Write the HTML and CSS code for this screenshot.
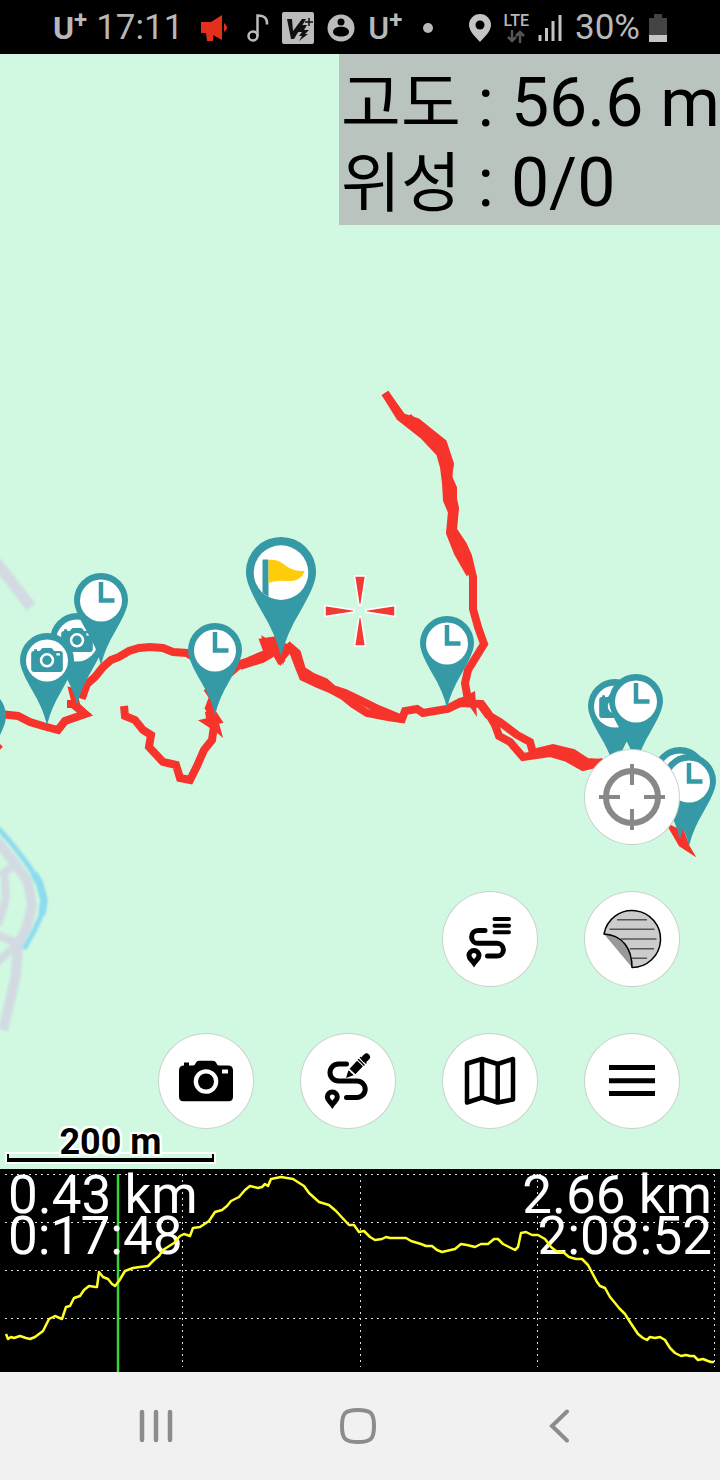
FILE: index.html
```html
<!DOCTYPE html>
<html lang="ko">
<head>
    <meta charset="UTF-8" />
    <meta name="viewport" content="width=device-width, initial-scale=1.0" />
    <title>Track Map</title>
    <link rel="stylesheet" href="styles.css">
</head>
<body>
    <header class="status-bar">
        <div class="status-group">
            <span class="carrier bold">U<sup>+</sup></span>
            <span class="status-text clock">17:11</span>
            <svg class="megaphone" width="30" height="30" viewBox="0 0 30 30">
                <path d="M1 9h10L22 2v25l-9-5v6H7l-1-8H1z" fill="#e3301c" />
                <path d="M24 10q6 4.500 0 9z" fill="#e3301c" />
            </svg>
            <svg class="note" width="22" height="28" viewBox="0 0 22 28">
                <circle cx="6" cy="22" r="4.500" fill="none" stroke="#bbb" stroke-width="2.500" />
                <path d="M10.500 22V1.500c8 0 10 4 9.500 9" fill="none" stroke="#bbb" stroke-width="2.500" />
            </svg>
            <svg width="32" height="32" viewBox="0 0 32 32">
                <rect width="32" height="32" rx="2" fill="#bbb" />
                <path d="M5 7h5l1 12 9-12h4L12 27H9zM20 13h5l-3 5h5l-4 4h3l-9 7 3-5h-3l3-4h-4z" fill="#111" />
                <path d="M27 6v8M23 10h8" stroke="#111" stroke-width="1.500" />
            </svg>
            <svg width="28" height="28" viewBox="0 0 28 28">
                <circle cx="14" cy="14" r="13.500" fill="#bbb" />
                <circle cx="14" cy="8" r="3.500" fill="#000" />
                <path d="M6 18c0-7 16-7 16 0 0 6-16 6-16 0z" fill="#000" />
            </svg>
            <span class="carrier">U<sup>+</sup></span>
            <span class="dot"></span>
        </div>
        <div class="status-group">
            <svg width="22" height="28" viewBox="0 0 22 28">
                <path d="M11 0a11 11 0 0 1 11 11c0 7-8 13-11 17C8 24 0 18 0 11A11 11 0 0 1 11 0z" fill="#c4c4c4" />
                <circle cx="11" cy="11" r="4.500" fill="#000" />
            </svg>
            <span class="network">
                <span>LTE</span>
                <svg width="18" height="13" viewBox="0 0 18 13">
                    <path d="M5 0v11M1 7l4 4 4-4M13 13V2M9 6l4-4 4 4" fill="none" stroke="#555" stroke-width="2.500" />
                </svg>
            </span>
            <svg class="signal" width="24" height="26" viewBox="0 0 24 26">
                <path d="M2 20v6M8.500 13v13M15 6v20M22 0v26" stroke="#c4c4c4" stroke-width="3" />
            </svg>
            <span class="status-text battery-level">30%</span>
            <svg width="18" height="28" viewBox="0 0 18 28">
                <path d="M5 0h8v4h5v24H0V4h5z" fill="#444" />
                <path d="M0 21h18v7H0z" fill="#c4c4c4" />
            </svg>
        </div>
    </header>

    <main class="map">
        <svg class="map-canvas" viewBox="0 54 720 1115" preserveAspectRatio="xMidYMid slice">
            <defs>
                <symbol id="camera" viewBox="0 0 54 41">
                    <path fill-rule="evenodd" d="M5 5V2h5v3h4q2 0 3-3 1-2 4-2h12q3 0 4 2 1 3 3 3h9q5 0 5 5v26q0 5-5 5H5q-5 0-5-5V10q0-5 5-5zM27 8.700a12.300 12.300 0 1 0 0 24.600 12.300 12.300 0 1 0 0-24.600zM43 9v4h6V9z" />
                    <circle cx="27" cy="21" r="8" />
                </symbol>
                <g id="pin">
                    <path d="M0-27A27 27 0 0 1 27 0C27 9 20 21 15 30Q4 48 0 65-4 48-15 30C-20 21-27 9-27 0A27 27 0 0 1 0-27z" fill="#359aa5" />
                    <circle cy="0.500" r="21" fill="#fff" />
                </g>
                <g id="pin-clock">
                    <use href="#pin" />
                    <path d="M0-18V0.500H13.500" fill="none" stroke="#359aa5" stroke-width="4.500" />
                </g>
                <g id="pin-camera">
                    <use href="#pin" />
                    <use href="#camera" x="-16" y="-12" width="32" height="24" fill="#359aa5" />
                </g>
            </defs>

            <!-- roads and stream -->
            <g class="roads">
                <path d="M-4 562 31 607" stroke-width="11" />
                <path d="M-4 840 14 862 28 882 32 905 27 927 18 944 16 975 3 1030" stroke-width="10" />
                <path d="M0 875 14 866M4 870 6 898-2 925M-2 935 18 944-4 963" stroke-width="8" />
                <path class="stream" d="M-2 828 12 844 26 862 38 880 44 900 42 914 34 931 24 949" stroke-width="5" />
                <path class="stream" d="M34 874 40 884 44 900 42 914" stroke-width="7" />
            </g>

            <!-- recorded track -->
            <g class="track">
                <path d="M-4 748 0 744M0 714 18 716 30 722 43 726 58 730 65 721 85 714 70 702M67 704 76 704 73 692 83 695 87 684 95 677 103 667 111 660 119 657 129 651 139 648 150 647 163 648 173 652 187 653 200 661 231 672 240 664 249 661 258 657 268 653 264 642 278 640 282 657 290 647 297 653 302 670 313 677 325 682 333 689 345 693 362 701 378 709 402 719" />
                <path d="M240 666 262 659 269 655 267 644 274 649 282 663M290 647 293 651 299 667 303 677 318 684 330 689 343 696 353 704 367 713 388 717 402 719 405 711 417 709 423 713 447 709 460 702 470 699" />
                <path d="M124 706 125 716 135 720 143 730 151 735 149 747 163 762 176 765 180 778 190 780 197 766 204 750 212 740 214 726 208 722 217 720 209 708 213 697 207 688" />
                <path d="M385 393 402 417 417 422 443 443 450 464 448 477 453 488 453 499 455 508 453 530 463 545 468 556 473 577 473 609 478 627 484 644 476 657 468 670 465 683 468 700" />
                <path d="M385 393 400 417 423 435 440 453 444 467 446 483 447 500 452 512 450 533 458 553 470 574" />
                <path d="M408 417 432 439 444 450 448 470 450 500" />
                <path d="M447 709 460 703 480 704 488 715 500 722 517 735 530 742 533 753 553 748 573 753 587 762 603 763" />
                <path d="M480 702 488 713 495 725 499 736 510 742 523 757 550 753 567 758 583 767 603 762" />
            </g>
            <path class="track-fill" d="M205 712 215 708 223 738 207 724zM463 697 475 691 477 717zM665 822 677 828 683 829 688 844 696 857 679 846zM80 704 91 714 80 719zM275 642 290 644 283 665z" />

            <!-- waypoints -->
            <use href="#pin-camera" x="77" y="640" />
            <use href="#pin-clock" x="101" y="600" />
            <use href="#pin-camera" x="47" y="660" />
            <use href="#pin-clock" x="-21" y="716" />
            <use href="#pin-clock" x="215" y="650" />
            <use href="#pin-clock" x="447" y="643" />
            <use href="#pin-camera" x="615" y="706" />
            <use href="#pin-clock" x="636" y="701" />
            <use href="#pin-clock" x="680" y="774" />
            <use href="#pin-clock" x="689" y="781" />
            <path class="track-fill" d="M683 828 689 845 696 857 679 846z" />
            <use href="#pin" transform="translate(281 572) scale(1.3)" />
            <path d="M262.500 559.500h6v37q-3-1-6-4z" fill="#359aa5" />
            <path d="M268.500 560c16-2 16 12 36 11-4 14-20 9-26 10q-5 0-10 2z" fill="#ffcc0a" />

            <!-- map centre -->
            <g class="crosshair">
                <path id="blade" d="M354.500 576h11L361 605h-2z" />
                <use href="#blade" transform="rotate(90 360 611)" />
                <use href="#blade" transform="rotate(180 360 611)" />
                <use href="#blade" transform="rotate(270 360 611)" />
            </g>
        </svg>

        <div class="gps-info">
            <div><span class="gps-label">고도</span> : 56.6 m</div>
            <div><span class="gps-label">위성</span> : 0/0</div>
        </div>

        <div class="scale">
            <span class="scale-label">200 m</span>
            <div class="scale-bar"></div>
        </div>

        <div class="map-buttons">
            <button class="map-button my-location" aria-label="현재 위치">
                <svg viewBox="0 0 94 94" fill="none" stroke="#888">
                    <circle cx="47" cy="47" r="26" stroke-width="6" />
                    <path d="M47 14v21M47 59v21M14 47h21M59 47h21" stroke-width="4" />
                </svg>
            </button>
            <button class="map-button track-list" aria-label="트랙 목록">
                <svg viewBox="0 0 94 94" fill="none" stroke="#000" stroke-linecap="round">
                    <path d="M42 38.500H35a6.400 6.400 0 0 0 0 12.800H54a6.400 6.400 0 0 1 0 12.800H44.500" stroke-width="5" />
                    <path d="M51.500 27H66M51.500 33.700H66M51.500 40.300H66" stroke-width="4" />
                    <path d="M31 71c-2-3-5-4-5-7.500a5 5 0 0 1 10 0c0 3.500-3 4.500-5 7.500z" stroke-width="5" />
                </svg>
            </button>
            <button class="map-button" aria-label="오버레이">
                <svg viewBox="0 0 94 94" stroke-linejoin="round">
                    <path d="M19 42 47 75.500V50L30 40z" fill="#999" />
                    <path d="M19 42A28.500 28.500 0 1 1 47 75.500C47 57 38 43 19 42z" fill="#ccc" stroke="#000" stroke-width="1.500" />
                    <path d="M32 27.700h30M24.500 37.300h45M36 47h35.500M45 56.700h24M47 66.300h15" stroke="#555" stroke-width="1.500" />
                </svg>
            </button>
            <button class="map-button take-photo" aria-label="사진">
                <svg viewBox="0 0 94 94">
                    <use href="#camera" x="20" y="26.500" width="54" height="41" />
                </svg>
            </button>
            <button class="map-button" aria-label="트랙 편집">
                <svg viewBox="0 0 94 94" fill="none" stroke="#000" stroke-linecap="round">
                    <path d="M45.500 30H37.500a8.500 8.500 0 0 0 0 17H56a8.200 8.200 0 0 1 0 16.400H45.500" stroke-width="5" />
                    <path d="M31.300 70.500c-2-3-5-4-5-7.500a5 5 0 0 1 10 0c0 3.500-3 4.500-5 7.500z" stroke-width="5" />
                    <path d="M45 44 47.500 36 53 41z" fill="#000" stroke="none" />
                    <path d="M51.500 37.500 59 29.500" stroke-width="8" stroke-linecap="butt" />
                    <path d="M57.500 25.500 63 31M59.500 23.500 65 29" stroke-width="1.500" />
                    <path d="M64 24.500 65.500 23" stroke-width="7" />
                    <path d="M47.500 36q2.500 0 2.500 2.500 2.500 0 3 2.500" stroke="#fff" stroke-width="1" />
                </svg>
            </button>
            <button class="map-button" aria-label="지도">
                <svg viewBox="0 0 94 94" fill="none" stroke="#000" stroke-width="4.500" stroke-linejoin="round">
                    <path d="M24 29.500 39 25 54.700 30 70 25V65.500L54.700 68.500 39 63.500 24 68.500zM39 25V63.500M54.700 30V68.500" />
                </svg>
            </button>
            <button class="map-button" aria-label="메뉴">
                <svg viewBox="0 0 94 94" stroke="#000" stroke-width="5">
                    <path d="M24 33.500h46M24 46.700h46M24 59.500h46" />
                </svg>
            </button>
        </div>
    </main>

    <section class="elevation">
        <svg class="chart" viewBox="0 1169 720 203" preserveAspectRatio="none">
            <path class="grid-line" d="M5 1174.500H715M5 1222.500H715M5 1270.500H715M5 1318.500H715M182.500 1174V1367M360.500 1174V1367M537.500 1174V1367M714.500 1174V1367" />
            <path class="cursor" d="M118 1174V1372" />
        </svg>
        <div class="readings">
            <div>0.43 km<br>0:17:48</div>
            <div class="total">2.66 km<br>2:08:52</div>
        </div>
        <svg class="chart" viewBox="0 1169 720 203" preserveAspectRatio="none">
            <path class="profile" d="M6 1334 8 1339 11 1337 14 1338 20 1336 26 1338 30 1339 35 1337 39 1334 43 1331 46 1325 49 1319 55 1316 62 1319 66 1307 70 1306 74 1298 80 1296 84 1290 89 1286 96 1287 97 1287 99 1272 103 1277 108 1279 112 1284 115 1286 119 1281 125 1271 133 1268 140 1267 148 1266 154 1260 159 1256 163 1250 174 1243 180 1236 184 1234 190 1236 193 1228 200 1227 209 1221 215 1212 222 1210 227 1206 231 1201 239 1197 245 1190 250 1186 258 1188 262 1187 265 1184 268 1186 271 1179 281 1177 293 1179 304 1186 309 1193 319 1202 329 1205 336 1211 349 1225 354 1225 359 1232 364 1231 370 1237 375 1240 382 1239 386 1237 390 1238 406 1238 411 1241 421 1244 426 1246 432 1246 437 1250 442 1252 455 1249 461 1244 467 1245 475 1247 481 1244 488 1244 494 1239 498 1239 503 1244 509 1247 515 1250 518 1247 521 1233 526 1232 532 1235 538 1235 545 1239 551 1247 556 1251 563 1252 569 1257 576 1259 582 1259 588 1265 597 1282 600 1286 605 1288 610 1297 615 1303 619 1308 625 1314 630 1322 638 1334 643 1338 647 1340 650 1337 655 1338 660 1337 665 1340 670 1348 675 1353 681 1356 686 1355 690 1356 694 1356 698 1360 703 1359 708 1361 711 1362 714 1362" />
        </svg>
    </section>

    <nav class="nav-bar">
        <button class="nav-button" aria-label="최근 앱">
            <svg viewBox="0 0 36 36"><path d="M4 4v28M18 4v28M32 4v28" stroke-width="4.500" /></svg>
        </button>
        <button class="nav-button" aria-label="홈">
            <svg viewBox="0 0 36 36"><path d="M18 2C31 2 34 5 34 18S31 34 18 34 2 31 2 18 5 2 18 2z" stroke-width="4" /></svg>
        </button>
        <button class="nav-button" aria-label="뒤로">
            <svg viewBox="0 0 36 36"><path d="M25 3.500 10 18 25 32.500" stroke-width="4" /></svg>
        </button>
    </nav>
</body>
</html>
```

FILE: styles.css
```css
:root {
    --map-color: #d1f8e1;
    --track-color: #f6342c;
    --status-color: #b8b8b8;
    --nav-color: #8c8c8c;
}

* {
    box-sizing: border-box;
}

body {
    display: flex;
    flex-direction: column;
    min-height: 100vh;
    margin: 0;
    font-family: Roboto, "Noto Sans CJK KR", sans-serif;
    background-color: #000;
    color: #000;
}

button {
    padding: 0;
    border: none;
    background: none;
    cursor: pointer;
}

svg {
    display: block;
    flex: none;
}

/* status bar */

.status-bar {
    display: flex;
    justify-content: space-between;
    align-items: center;
    height: 54px;
    padding: 2px 53px 0;
    color: var(--status-color);
}

.status-group {
    display: flex;
    align-items: center;
    gap: 13px;
    white-space: nowrap;
}

.status-text {
    font-size: 35px;
    line-height: 40px;
}

.clock {
    margin-left: -4px;
}

.megaphone {
    margin-left: 4px;
}

.note {
    margin-left: 4px;
}

.carrier {
    display: flex;
    font-size: 32px;
    line-height: 36px;
    font-weight: 500;
}

.carrier.bold {
    font-weight: 700;
}

.carrier sup {
    font-size: 24px;
    line-height: 20px;
    font-weight: 700;
    vertical-align: top;
}

.dot {
    width: 10px;
    height: 10px;
    margin-left: 8px;
    border-radius: 50%;
    background-color: var(--status-color);
}

.network {
    display: flex;
    flex-direction: column;
    align-items: center;
    gap: 2px;
    font-size: 16px;
    line-height: 15px;
    font-weight: 500;
}

.signal {
    margin-left: -4px;
}

.battery-level {
    margin-right: -4px;
}

/* map */

.map {
    position: relative;
    flex: 1;
    display: flex;
    flex-direction: column;
    justify-content: space-between;
    align-items: flex-end;
    min-height: 800px;
    background-color: var(--map-color);
    overflow: hidden;
}

.map-canvas {
    position: absolute;
    inset: 0;
    width: 100%;
    height: 100%;
}

.roads path {
    fill: none;
    stroke: #d2dbe2;
    stroke-linejoin: round;
    filter: blur(1px);
}

.roads .stream {
    stroke: #8edbee;
}

.track path {
    fill: none;
    stroke: var(--track-color);
    stroke-width: 8;
}

.track-fill {
    fill: var(--track-color);
}

.crosshair {
    fill: #f33a35;
    stroke: #fff;
    stroke-width: 1.5;
}

.gps-info {
    position: relative;
    padding: 9px 0 2px 2px;
    background-color: #bac4be;
    font-size: 68px;
    line-height: 80px;
    white-space: nowrap;
}

.gps-label {
    font-size: 65px;
    line-height: 1;
}

.map-buttons {
    position: relative;
    display: grid;
    grid-template-columns: repeat(4, 94px);
    gap: 48px;
    padding: 41px;
}

.map-button {
    width: 94px;
    height: 94px;
    border-radius: 50%;
    background-color: #fff;
    box-shadow: 0 0 0 1px #c8d2cc;
}

.map-button svg {
    width: 94px;
    height: 94px;
}

.my-location {
    grid-column: 4;
}

.track-list {
    grid-column: 3;
}

.take-photo {
    grid-column: 1;
}

.scale {
    position: absolute;
    left: 7px;
    bottom: 7px;
    width: 207px;
    text-align: center;
}

.scale-label {
    display: block;
    font-size: 36px;
    line-height: 24px;
    font-weight: 700;
    text-shadow: 2px 0 #fff, -2px 0 #fff, 0 2px #fff, 0 -2px #fff,
        2px 2px #fff, -2px -2px #fff, 2px -2px #fff, -2px 2px #fff;
}

.scale-bar {
    height: 8px;
    border: 2px solid #000;
    border-top: none;
    border-bottom-width: 4px;
    box-shadow: 0 0 0 2px #fff;
}

/* elevation profile */

.elevation {
    position: relative;
    height: 203px;
    background-color: #000;
}

.chart {
    position: absolute;
    inset: 0;
    width: 100%;
    height: 100%;
}

.chart path {
    fill: none;
}

.chart .grid-line {
    stroke: #ddd;
    stroke-width: 1;
    stroke-dasharray: 2 4;
}

.chart .cursor {
    stroke: #37d637;
    stroke-width: 2.5;
}

.chart .profile {
    stroke: #ffff28;
    stroke-width: 2.5;
    stroke-linejoin: round;
}

.readings {
    position: relative;
    display: flex;
    justify-content: space-between;
    padding: 6px 8px;
    color: #fff;
    font-size: 53px;
    line-height: 41px;
}

.total {
    text-align: right;
}

/* navigation bar */

.nav-bar {
    display: flex;
    justify-content: center;
    align-items: center;
    gap: 166px;
    height: 108px;
    padding-right: 4px;
    background-color: #f1f1f1;
}

.nav-button {
    width: 36px;
    height: 36px;
}

.nav-button svg {
    width: 36px;
    height: 36px;
    fill: none;
    stroke: var(--nav-color);
    stroke-linecap: round;
}
```
